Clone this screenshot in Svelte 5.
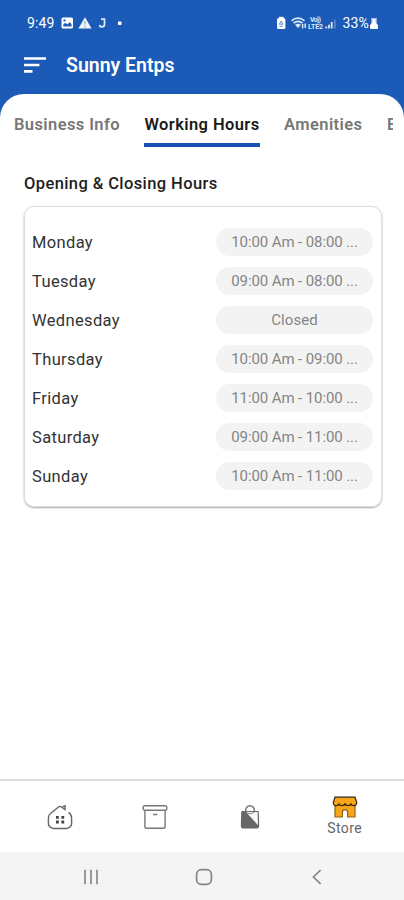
<script>
	const tabs = ["Business Info", "Working Hours", "Amenities", "E"];
	let active = $state("Working Hours");

	const hours = [
		{ day: "Monday", time: "10:00 Am - 08:00 ..." },
		{ day: "Tuesday", time: "09:00 Am - 08:00 ..." },
		{ day: "Wednesday", time: "Closed" },
		{ day: "Thursday", time: "10:00 Am - 09:00 ..." },
		{ day: "Friday", time: "11:00 Am - 10:00 ..." },
		{ day: "Saturday", time: "09:00 Am - 11:00 ..." },
		{ day: "Sunday", time: "10:00 Am - 11:00 ..." }
	];
</script>

<div class="screen">
	<header>
		<div class="status">
			<span class="clock">9:49</span>
			<svg class="notifications" width="66" height="14" viewBox="0 0 66 14">
				<rect x="1.5" y="1.5" width="11.5" height="11" rx="1.5" fill="#fff" />
				<path d="M3.3 10.500V8.500l2-1.700 2 1.700 2.400-2.200 1.800 1.600v2.600z" fill="#1b5ab6" />
				<rect x="3.500" y="3.400" width="2" height="2" fill="#1b5ab6" />
				<path d="M25 1.200 31.600 12.500H18.400z" fill="#f2f6fc" />
				<path d="M25 5v3.800M25 10v1.400" stroke="#7fa3d8" stroke-width="1.2" />
				<path d="M41 3.200h3.500v5q0 2.600-2.600 2.600-2.100 0-2.400-1.800" fill="none" stroke="#dce7f7" stroke-width="1.8" />
				<rect x="58" y="5.400" width="3.500" height="3.500" rx=".6" fill="#fff" />
			</svg>
			<svg class="signals" width="62" height="14" viewBox="0 0 62 14">
				<rect x="1" y="2" width="8.4" height="11" rx="1.6" fill="#fff" />
				<rect x="3" y=".8" width="4.4" height="2" fill="#fff" />
				<path d="M5.2 5 7 8.2H3.4zM3.6 10.3h3.2" fill="none" stroke="#5f8ccd" />
				<path d="M15.500 4.800q6.500-5.200 13 0M17.500 7.200q4.500-3.500 9 0" fill="none" stroke="#dce7f7" stroke-width="1.7" />
				<path d="m19 8.800q3-2.200 6 0l-3 3.200z" fill="#dce7f7" />
				<path d="M26.600 8v4.500M29.200 7.500V12" stroke="#dce7f7" stroke-width="1.5" />
				<text x="34" y="6.400" textLength="11">Vo))</text>
				<text x="32" y="13" textLength="15">LTE2</text>
				<path d="M50.3 12.500v-2M53 12.500V8.800M55.700 12.500V6" stroke="#dce7f7" stroke-width="1.8" />
				<path d="M58.800 12.500v-9" stroke="#5c88cb" stroke-width="1.8" />
			</svg>
			<span class="percent">33%</span>
			<svg class="battery" width="10" height="14" viewBox="0 0 10 14">
				<path d="M2 2h6v6H2z" fill="#8fb0e0" />
				<path d="M3.4 2.800h3.200v4L9 9v3.200q0 .8-.8.8H1.800q-.8 0-.8-.8V9l2.400-2.200z" fill="#fff" />
			</svg>
		</div>
		<div class="appbar">
			<svg width="24" height="18" viewBox="0 0 24 18">
				<path d="M1 2.500h22M1 9h15.400M1 15.400h8.500" stroke="#fff" stroke-width="2.700" />
			</svg>
			<h1>Sunny Entps</h1>
		</div>
	</header>

	<main>
		<nav class="tabs">
			{#each tabs as tab}
				<button class:active={tab === active} onclick={() => (active = tab)}>{tab}</button>
			{/each}
		</nav>

		<h2>Opening &amp; Closing Hours</h2>

		<section class="card">
			{#each hours as { day, time }}
				<div class="row">
					<span class="day">{day}</span>
					<span class="time" class:closed={time === "Closed"}>{time}</span>
				</div>
			{/each}
		</section>
	</main>

	<nav class="bottom">
		<button aria-label="Home">
			<svg width="26" height="26" viewBox="0 0 26 26" fill="none" stroke="#666" stroke-width="1.4">
				<path d="M21.500 8.400q3.100 2 3.100 5.600v5.600q0 3.200-3.200 4.300l-1.800.6H6.400l-1.800-.6q-3.200-1.100-3.200-4.300V14q0-3 2.400-4.800L11.500 3q1.500-1.200 3 0l3.500 2.600V1.800l-2.400.8" />
				<path d="M9 13.400h2.800M14.400 13.400h2.800M9 18h2.800M14.400 18h2.800" stroke="#444" stroke-width="2.800" />
			</svg>
		</button>
		<button aria-label="Orders">
			<svg width="26" height="26" viewBox="0 0 26 26" fill="none" stroke="#777" stroke-width="1.400">
				<rect x="1.200" y="1.700" width="23.600" height="4.600" rx="1.600" />
				<path d="M2.900 6.300v16.200q0 1.800 1.800 1.800h16.600q1.800 0 1.800-1.800V6.300M11 10.500h4.400" />
			</svg>
		</button>
		<button aria-label="Products">
			<svg width="20" height="26" viewBox="0 0 20 26">
				<path d="M5.500 8Q5.600 1.800 10 1.800T14.500 8" fill="none" stroke="#777" stroke-width="1.400" />
				<path d="M2.200 7h15.600q1 0 1 1l.4 13.800q0 2.800-2.800 2.800H3.600Q.8 24.600.8 21.800L1.200 8q0-1 1-1z" fill="#666" />
				<path d="M6 8h11.600l.4 13.200z" fill="#f8f8f8" />
				<path d="M5.500 8q4.500 3.500 9 0" fill="none" stroke="#888" stroke-width="1" />
			</svg>
		</button>
		<button class="current">
			<svg width="26" height="22" viewBox="0 0 26 22" stroke="#33270f" stroke-width="1.200">
				<path d="M3 9v12h7.400v-5q0-2.300 2.600-2.300t2.600 2.300v5H23V9z" fill="#f9a61c" stroke="#8f6115" />
				<path d="M3 1.200h20l1.700 5.200q0 3.200-2.900 3.200-2.200 0-2.900-1.700-.8 1.700-2.900 1.700T13 7.900q-.9 1.700-3 1.700T7.100 7.900Q6.400 9.600 4.200 9.600 1.300 9.600 1.300 6.400z" fill="#f9a61c" />
			</svg>
			<span>Store</span>
		</button>
	</nav>

	<footer>
		<svg width="18" height="16" viewBox="0 0 18 16" stroke="#999" stroke-width="2">
			<path d="M3 .7v14.600M9 .7v14.600M15 .7v14.600" />
		</svg>
		<svg width="18" height="18" viewBox="0 0 18 18" fill="none" stroke="#858585" stroke-width="1.700">
			<rect x="1.600" y="1.600" width="14.800" height="14.800" rx="4.800" />
		</svg>
		<svg width="18" height="18" viewBox="0 0 18 18" fill="none" stroke="#858585" stroke-width="1.600">
			<path d="M12.600 2.200 5.400 9l7.200 6.800" />
		</svg>
	</footer>
</div>

<style>
	:global(body) {
		margin: 0;
	}

	.screen {
		display: flex;
		flex-direction: column;
		width: 404px;
		height: 900px;
		overflow: hidden;
		background: #1b5ab6;
		font-family: Roboto, sans-serif;
	}

	button {
		padding: 0;
		border: 0;
		background: none;
		font: inherit;
	}

	svg {
		display: block;
		flex: none;
	}

	header {
		height: 94px;
		color: #fff;
	}

	.status {
		display: flex;
		align-items: center;
		height: 46px;
		padding: 0 25px 0 27px;
		box-sizing: border-box;
		font-size: 14px;
	}

	.clock {
		width: 33px;
		letter-spacing: 0.1px;
	}

	.signals {
		margin-left: auto;
	}

	.signals text {
		fill: #dce7f7;
		font-size: 7px;
		font-weight: 700;
	}

	.percent {
		margin-left: 4px;
		letter-spacing: 0.2px;
	}

	.appbar {
		display: flex;
		align-items: center;
		gap: 19px;
		height: 38px;
		padding-left: 23px;
	}

	h1 {
		margin: 0;
		font-size: 19.5px;
		font-weight: 600;
	}

	main {
		flex: 1;
		border-radius: 24px 24px 0 0;
		background: #fff;
	}

	.tabs {
		display: flex;
		gap: 24.5px;
		margin: 0 11px 0 14px;
		padding-top: 17px;
		overflow: hidden;
	}

	.tabs button {
		flex: none;
		height: 36px;
		padding-bottom: 6px;
		border-bottom: 4px solid transparent;
		box-sizing: border-box;
		color: #777;
		font-size: 16.5px;
		font-weight: 600;
		letter-spacing: 0.4px;
	}

	.tabs .active {
		border-color: #1751b3;
		color: #1a1a1a;
	}

	h2 {
		margin: 26px 0 12px 24px;
		color: #1e1e1e;
		font-size: 16.5px;
		font-weight: 500;
		letter-spacing: 0.4px;
		line-height: 21px;
	}

	.card {
		display: flex;
		flex-direction: column;
		gap: 11px;
		height: 301px;
		margin: 0 22px 0 24px;
		padding: 21px 8px 0 7px;
		box-sizing: border-box;
		border: 1px solid #ddd;
		border-radius: 10px;
		box-shadow: 0 1px 2px rgba(0, 0, 0, 0.35);
	}

	.row {
		display: flex;
		align-items: center;
		justify-content: space-between;
		height: 28px;
	}

	.day {
		color: #333;
		font-size: 16.5px;
		letter-spacing: 0.35px;
	}

	.time {
		width: 157px;
		border-radius: 14px;
		background: #f3f3f3;
		color: #858585;
		font-size: 15px;
		letter-spacing: -0.1px;
		line-height: 28px;
		text-align: center;
	}

	.closed {
		letter-spacing: 0.1px;
	}

	.bottom {
		display: flex;
		align-items: center;
		height: 73px;
		padding: 0 12px 0 13px;
		box-sizing: border-box;
		border-top: 2px solid #dcdcdc;
		background: #fff;
	}

	.bottom button {
		display: flex;
		flex: 1;
		flex-direction: column;
		align-items: center;
	}

	.current span {
		color: #666;
		font-size: 14px;
		letter-spacing: 0.4px;
		line-height: 20px;
	}

	footer {
		display: flex;
		align-items: center;
		justify-content: space-between;
		height: 48px;
		padding: 2px 78px 0 82px;
		box-sizing: border-box;
		background: #f4f4f4;
	}
</style>
